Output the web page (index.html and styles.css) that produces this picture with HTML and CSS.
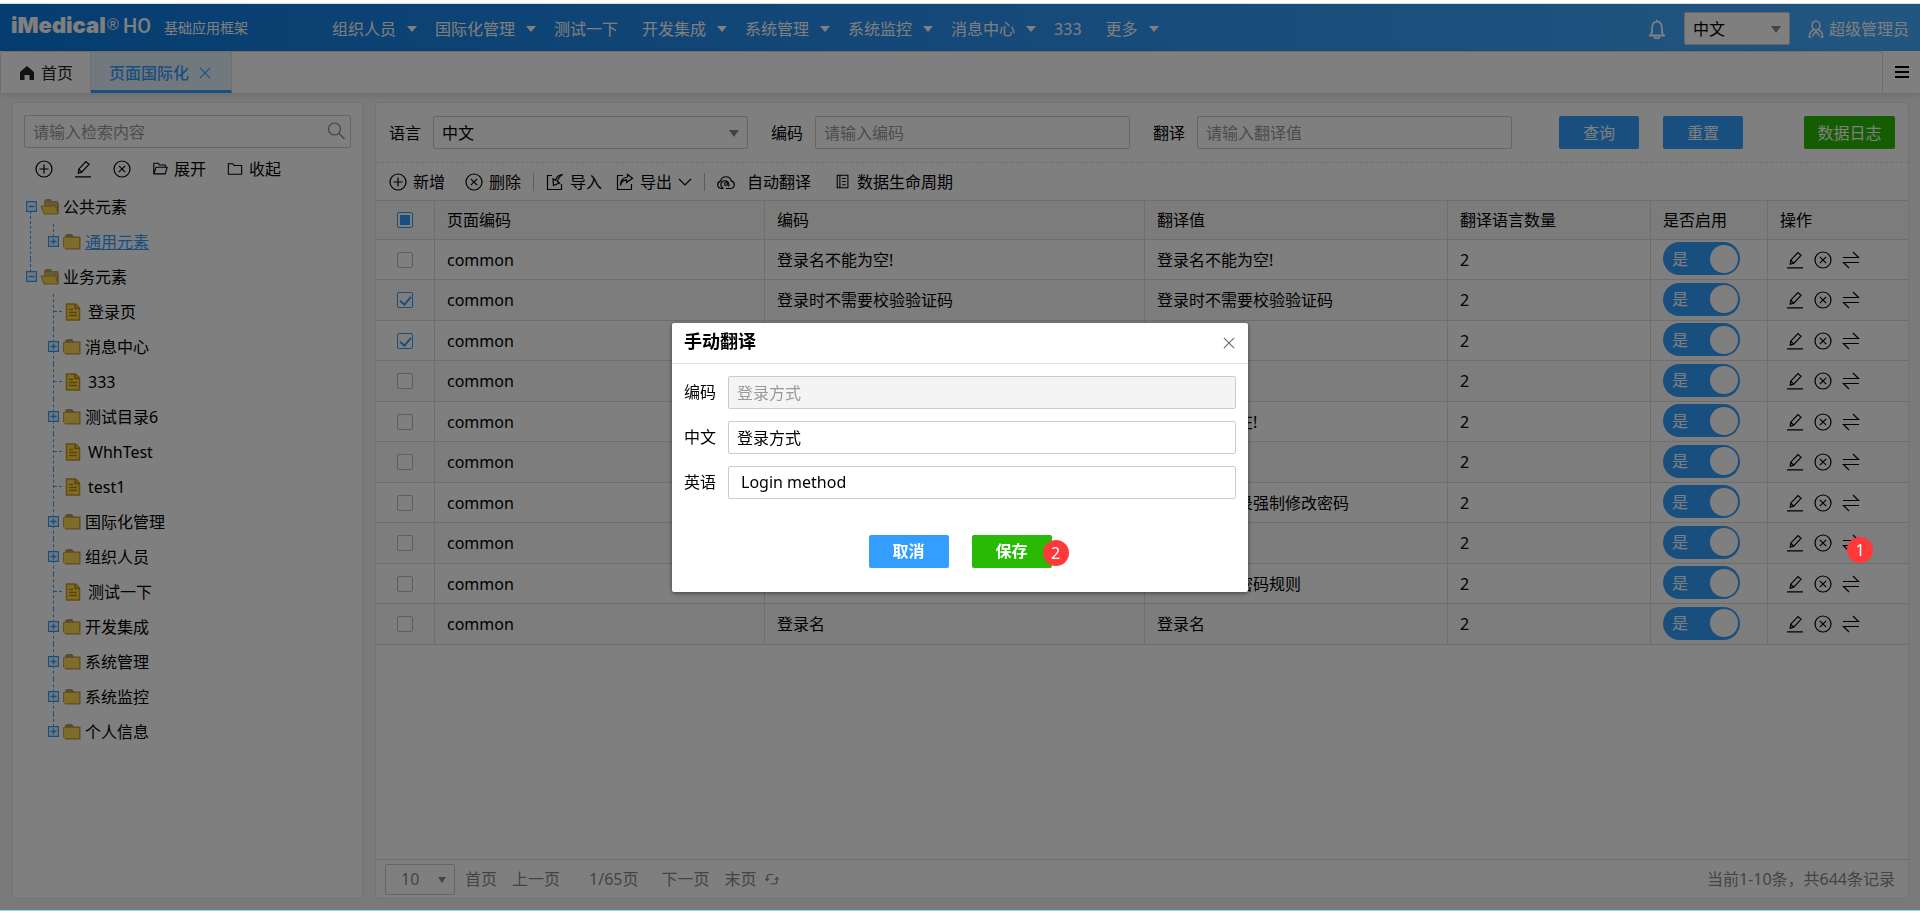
FILE: index.html
```html
<!DOCTYPE html>
<html lang="zh-CN">
<head>
<meta charset="utf-8">
<title>页面国际化</title>
<link rel="stylesheet" href="styles.css">
</head>
<body>
<svg class="sprite" aria-hidden="true">
  <symbol id="i-plus" viewBox="0 0 18 18"><circle cx="9" cy="9" r="8"/><path d="M9 4.5v9M4.5 9h9"/></symbol>
  <symbol id="i-del" viewBox="0 0 18 18"><circle cx="9" cy="9" r="8"/><path d="M5.8 5.8l6.4 6.4M12.2 5.8l-6.4 6.4"/></symbol>
  <symbol id="i-edit" viewBox="0 0 18 18"><path d="M1 16.8h16M4.2 13.2l.5-4L12 1.6l3 2.7-7.3 7.9zM4.7 9.2l3 3M4.2 13.2l1.2-1.3"/></symbol>
  <symbol id="i-swap" viewBox="0 0 18 18"><path d="M1 6.5h15.5L11 1M17 11.5H1.500L7 17"/></symbol>
  <symbol id="i-fopen" viewBox="0 0 18 18"><path d="M2 14.500V2.500h5l1.500 2h6.500V7M2 14.500L4.500 7H17l-2 7.500z"/></symbol>
  <symbol id="i-fclosed" viewBox="0 0 18 18"><path d="M1.500 15V3h5L8 5h8.500v10z"/></symbol>
  <symbol id="i-in" viewBox="0 0 18 18"><path d="M6 2.500H1.500v14h14V11M16.500 1.500C12 2 10 4 9.800 7.500L7 5.800 7.500 12.500 13.500 10 11.500 8.600C12 5.500 13.500 3 16.500 1.500z"/></symbol>
  <symbol id="i-out" viewBox="0 0 18 18"><path d="M7 2.500H1.500v14h14V11M4.500 12.500C5 8.500 7 7 10.500 6.800V9.500L16.500 5.300 11.500 1.500V4C7.500 4.500 4.500 7 4.500 12.500z"/></symbol>
  <symbol id="i-cloud" viewBox="0 0 18 18"><path d="M6.500 15.500H4.500A3.700 3.700 0 0 1 3.600 8.200 5.500 5.500 0 0 1 14.400 8.200 3.700 3.700 0 0 1 13.500 15.500H9M6.500 15.500A4 4 0 1 1 11.500 13.500"/><circle cx="9" cy="11" r="1.500"/></symbol>
  <symbol id="i-book" viewBox="0 0 18 18"><path d="M2.500 1.500h12v14h-12zM5.500 1.500v14M8 5h4M8 8.500h4M8 12h4"/></symbol>
  <symbol id="i-chev" viewBox="0 0 14 14"><path d="M1 4l6 6 6-6"/></symbol>
  <symbol id="i-close" viewBox="0 0 14 14"><path d="M1 1l12 12M13 1L1 13"/></symbol>
  <symbol id="i-search" viewBox="0 0 18 18"><circle cx="7.500" cy="7" r="6"/><path d="M12 11.500l5.500 5.500"/></symbol>
  <symbol id="i-bell" viewBox="0 0 18 20"><path d="M1 16.500h16M3 16c1.200-2 1-4 1.200-8C4.500 4.500 6.500 2.600 9 2.600s4.500 1.900 4.800 5.400c.2 4 0 6 1.200 8M9 .8v2M6.500 17.500a2.500 2 0 0 0 5 0"/></symbol>
  <symbol id="i-user" viewBox="0 0 16 18"><path d="M8 1a4 4.500 0 0 1 4 4.500A4 4.500 0 0 1 8 10 4 4.500 0 0 1 4 5.500 4 4.500 0 0 1 8 1zM5.500 9.500C3 11 1.500 13 1.200 17h2.500M10.500 9.500c2.500 1.500 4 3.500 4.300 7.500h-2.500M4.500 16l3.500-5 3.500 5"/></symbol>
  <symbol id="i-home" viewBox="0 0 14 14"><path class="fill" d="M7 0l7 6v8H9.500V9h-5v5H0V6z"/></symbol>
  <symbol id="i-menu" viewBox="0 0 14 14"><path class="fill" d="M0 1h14v2H0zM0 6h14v2H0zM0 11h14v2H0z"/></symbol>
  <symbol id="i-refresh" viewBox="0 0 14 14"><path d="M2 8V5.500Q2 2.500 5 2.500h3.500M5.500 12H9q3 0 3-3V6M.5 6.500L2 8.500l2-2M10 7.500L12 5.500l1.500 2"/></symbol>
  <symbol id="t-open" viewBox="0 0 20 18"><path fill="#bda05a" d="M4 3l2-2h5l1 2h6v10H4z"/><path fill="#c8b478" d="M5 4h12v5H5z"/><path fill="#ffd54f" stroke="#c39a3a" d="M1 8h14.500l2.500 8H4z"/><path stroke="#c9a24a" fill="none" d="M18.500 5v10.500"/></symbol>
  <symbol id="t-folder" viewBox="0 0 20 18"><path fill="#b8955a" d="M3 2.500L5 1h5l2 2.500h6.500v13H3z"/><path fill="#fdd956" stroke="#cfa540" d="M1.500 4.500h15l1 1v10H3L1.500 14z"/></symbol>
  <symbol id="t-file" viewBox="0 0 16 18"><path fill="#ffd84f" stroke="#c8961e" stroke-width="1.500" d="M1.500 1h9l4 4v12h-13z"/><path stroke="#b8860b" stroke-width="1.500" fill="none" d="M10 1v4.500h4.500M4 6.500h4M4 9.500h8M4 12.500h8"/></symbol>
  <symbol id="t-minus" viewBox="0 0 11 11"><path d="M.5.5h10v10H.5zM2.500 5.500h6"/></symbol>
  <symbol id="t-plus" viewBox="0 0 11 11"><path d="M.5.5h10v10H.5zM2.500 5.500h6M5.500 2.500v6"/></symbol>
</svg>

<header class="header">
  <div class="brand"><span class="brand-name">iMedical</span><span class="brand-reg">®</span><span class="brand-ho">HO</span><span class="brand-sub">基础应用框架</span></div>
  <nav class="nav">
    <a href="#" class="has-menu">组织人员</a><a href="#" class="has-menu">国际化管理</a><a href="#">测试一下</a><a href="#" class="has-menu">开发集成</a><a href="#" class="has-menu">系统管理</a><a href="#" class="has-menu">系统监控</a><a href="#" class="has-menu">消息中心</a><a href="#">333</a><a href="#" class="has-menu">更多</a>
  </nav>
  <div class="tools">
    <button class="plain" aria-label="通知"><svg class="icon bell"><use href="#i-bell"/></svg></button>
    <span class="select lang"><select aria-label="界面语言"><option>中文</option></select></span>
    <a href="#" class="user"><svg class="icon person"><use href="#i-user"/></svg>超级管理员</a>
  </div>
</header>

<div class="tabs">
  <div class="tab-list">
    <a href="#" class="tab"><svg class="icon sm"><use href="#i-home"/></svg>首页</a>
    <a href="#" class="tab active">页面国际化<svg class="icon xs"><use href="#i-close"/></svg></a>
  </div>
  <button class="plain tab-menu" aria-label="菜单"><svg class="icon sm"><use href="#i-menu"/></svg></button>
</div>

<main class="main">
  <aside class="panel side">
    <div class="search"><input class="field" type="text" aria-label="检索" placeholder="请输入检索内容"><svg class="icon"><use href="#i-search"/></svg></div>
    <div class="side-tools">
      <button class="plain" aria-label="新增"><svg class="icon"><use href="#i-plus"/></svg></button>
      <button class="plain" aria-label="修改"><svg class="icon"><use href="#i-edit"/></svg></button>
      <button class="plain" aria-label="删除"><svg class="icon"><use href="#i-del"/></svg></button>
      <button class="plain"><svg class="icon mid"><use href="#i-fopen"/></svg>展开</button>
      <button class="plain"><svg class="icon mid"><use href="#i-fclosed"/></svg>收起</button>
    </div>
    <ul class="tree" id="tree"></ul>
  </aside>

  <section class="panel content">
    <form class="filters">
      <div class="group"><label for="f-lang">语言</label><span class="select"><select id="f-lang"><option>中文</option></select></span></div>
      <div class="group"><label for="f-code">编码</label><input class="field" id="f-code" type="text" placeholder="请输入编码"></div>
      <div class="group"><label for="f-text">翻译</label><input class="field" id="f-text" type="text" placeholder="请输入翻译值"></div>
      <div class="actions">
        <button type="button" class="btn">查询</button>
        <button type="button" class="btn">重置</button>
        <button type="button" class="btn green log">数据日志</button>
      </div>
    </form>
    <div class="toolbar">
      <button class="plain"><svg class="icon"><use href="#i-plus"/></svg>新增</button>
      <button class="plain"><svg class="icon"><use href="#i-del"/></svg>删除</button>
      <span class="sep"></span>
      <button class="plain"><svg class="icon"><use href="#i-in"/></svg>导入</button>
      <button class="plain export"><svg class="icon"><use href="#i-out"/></svg>导出<svg class="icon sm"><use href="#i-chev"/></svg></button>
      <span class="sep"></span>
      <button class="plain wide"><svg class="icon"><use href="#i-cloud"/></svg>自动翻译</button>
      <button class="plain"><svg class="icon mid"><use href="#i-book"/></svg>数据生命周期</button>
    </div>
    <table class="grid">
      <colgroup><col class="c-check"><col class="c-page"><col class="c-code"><col class="c-text"><col class="c-count"><col class="c-on"><col></colgroup>
      <thead><tr><th><input type="checkbox" class="check partial" aria-label="全选"></th><th>页面编码</th><th>编码</th><th>翻译值</th><th>翻译语言数量</th><th>是否启用</th><th>操作</th></tr></thead>
      <tbody id="rows"></tbody>
    </table>
    <footer class="pager">
      <span class="select size"><select aria-label="每页条数"><option>10</option></select></span>
      <a href="#">首页</a><a href="#">上一页</a><span class="pages">1/65页</span><a href="#">下一页</a><a href="#">末页</a>
      <button class="plain" aria-label="刷新"><svg class="icon sm"><use href="#i-refresh"/></svg></button>
      <span class="total">当前1-10条，共644条记录</span>
    </footer>
  </section>
</main>

<div class="overlay">
  <div class="dialog" role="dialog" aria-labelledby="dlg-title">
    <div class="dialog-head"><h2 id="dlg-title">手动翻译</h2><button class="plain" aria-label="关闭"><svg class="icon xs"><use href="#i-close"/></svg></button></div>
    <form class="dialog-body">
      <div class="group"><label for="d-code">编码</label><input class="field" id="d-code" type="text" value="登录方式" disabled></div>
      <div class="group"><label for="d-zh">中文</label><input class="field" id="d-zh" type="text" value="登录方式"></div>
      <div class="group"><label for="d-en">英语</label><input class="field en" id="d-en" type="text" value="Login method"></div>
      <div class="dialog-actions">
        <button type="button" class="btn strong">取消</button>
        <button type="button" class="btn green strong">保存<span class="badge on-btn">2</span></button>
      </div>
    </form>
  </div>
</div>
<script src="app.js"></script>
</body>
</html>
```

FILE: styles.css
```css
* { box-sizing: border-box; }
body { margin: 0; padding-top: 3px; min-height: 100vh; display: flex; flex-direction: column; background: #fff; border-bottom: 1px solid #a9d6d6; color: #000; font: 16px/24px "Noto Sans", "Noto Sans CJK SC", sans-serif; }
button, input, select { font: inherit; color: inherit; }
a { color: inherit; text-decoration: none; }
.sprite { position: absolute; width: 0; height: 0; }
.icon { width: 18px; height: 18px; flex: none; fill: none; stroke: currentColor; stroke-width: 1.2; }
.icon.mid { width: 16px; height: 16px; }
.icon.sm { width: 14px; height: 14px; }
.icon.xs { width: 12px; height: 12px; }
.fill { fill: currentColor; stroke: none; }
.plain { display: inline-flex; align-items: center; gap: 6px; padding: 0; border: 0; background: none; white-space: nowrap; }

.header { display: flex; align-items: center; height: 48px; padding: 2px 11px 0; border-top: 1px solid #d8dce0; color: #fff; background: linear-gradient(90deg, #0c7ae0, #2a92f2 50%, #46acff); }
.brand { display: flex; align-items: baseline; width: 321px; height: 32px; }
.brand-name { width: 96px; font: 900 22px/24px Inter, sans-serif; }
.brand-reg { width: 16px; font: 16px/24px "Liberation Sans", sans-serif; align-self: flex-start; }
.brand-ho { width: 41px; font: 500 20px/24px Roboto, sans-serif; }
.brand-sub { font-size: 14px; }
.nav { display: flex; gap: 18px; }
.nav a { display: flex; align-items: center; padding-right: 6px; white-space: nowrap; }
.nav .has-menu { gap: 11px; padding: 0; }
.nav .has-menu::after { content: ""; border: 5px solid transparent; border-top: 6px solid #fff; border-bottom: 0; }
.tools { display: flex; align-items: center; gap: 18px; margin-left: auto; }
.bell { height: 20px; stroke-width: 1.8; }
.person { width: 16px; stroke-width: 1.5; }
.user { display: flex; align-items: center; gap: 5px; }

.select { position: relative; display: flex; flex: 1; }
.select select { width: 100%; height: 33px; padding: 0 8px; appearance: none; border: 1px solid #ccc; border-radius: 2px; background: #fff; }
.select::after { content: ""; position: absolute; right: 9px; top: 14px; border: 5px solid transparent; border-top: 7px solid #888; border-bottom: 0; pointer-events: none; }
.lang { flex: none; width: 106px; color: #000; }

.tabs { display: flex; height: 42px; z-index: 1; background: #fff; box-shadow: 0 2px 6px rgba(0, 0, 0, .12); }
.tab-list { display: flex; flex: 1; border: 1px solid #ddd; border-bottom: 0; border-radius: 4px 4px 0 0; }
.tab { display: flex; align-items: center; gap: 7px; padding: 0 17px 0 19px; color: #222; border-right: 1px solid #ddd; }
.tab.active { gap: 10px; padding: 3px 20px 0 18px; color: #339eff; font-weight: 500; background: #e3f2fd; border-bottom: 3px solid #339eff; }
.tab-menu { width: 37px; padding-left: 12px; }

.main { flex: 1; display: grid; grid-template-columns: 351px minmax(0, 1fr); gap: 12px; padding: 9px 11px 11px 12px; background: #f5f5f5; }
.panel { border: 1px solid #e2e2e2; border-radius: 4px; background: #fff; }
.field { flex: 1; min-width: 0; height: 33px; padding: 0 8px; border: 1px solid #ccc; border-radius: 2px; background: #fff; }
.field::placeholder { color: #999; opacity: 1; }
.field:disabled { background: #f4f4f4; color: #999; }
.field.en { padding-left: 12px; }

.side { padding: 12px 11px; }
.search { position: relative; display: flex; }
.search .icon { position: absolute; right: 6px; top: 7px; color: #888; }
.side-tools { display: flex; align-items: center; gap: 21px; height: 41px; padding-left: 11px; }
.tree, .tree ul { margin: 0; padding: 0; list-style: none; }
.tree li { position: relative; }
.tree li::before { content: ""; position: absolute; left: 6px; top: 0; bottom: 0; border-left: 1px dashed #339eff; }
.tree > li:first-child::before { top: 12px; }
.tree li:last-child::before { bottom: auto; height: 18px; }
.tree ul { padding-left: 23px; }
.node { position: relative; display: flex; align-items: center; height: 35px; padding-left: 2px; gap: 3px; }
.tree ul .node { padding-left: 1px; }
.node .box { width: 11px; height: 11px; fill: #e3f2fd; stroke: #339eff; stroke-width: 1.3; }
.node .pic { width: 20px; height: 18px; }
.node .pic.file { width: 16px; margin-right: 4px; }
.node .dash { flex: none; width: 8px; margin-left: 6px; border-top: 1px dashed #339eff; }
.node.picked a { color: #339eff; text-decoration: underline; }

.content { display: flex; flex-direction: column; }
.filters { display: flex; gap: 23px; padding: 13px; border-bottom: 1px dashed #ddd; }
.group { display: flex; flex: 1; align-items: center; gap: 12px; }
.actions { display: flex; gap: 24px; padding-left: 24px; }
.btn { position: relative; width: 80px; height: 33px; padding: 0; border: 0; border-radius: 2px; background: #339eff; color: #fff; }
.btn.green { background: #28ba05; }
.btn.log { width: 91px; margin-left: 37px; }
.btn.strong { font-weight: 700; }
.toolbar { display: flex; align-items: center; height: 37px; padding-left: 13px; gap: 16px; }
.toolbar .plain + .plain { margin-left: 4px; }
.toolbar .plain.export { margin-left: -2px; }
.toolbar .wide { gap: 12px; margin-right: 4px; }
.toolbar .sep { width: 1px; height: 18px; margin: 0 -4px; background: #bbb; }

.grid { width: 100%; table-layout: fixed; border-spacing: 0; border-top: 1px solid #ddd; }
.c-check { width: 59px; }
.c-page { width: 330px; }
.c-code { width: 380px; }
.c-text { width: 303px; }
.c-count { width: 203px; }
.c-on { width: 117px; }
.grid th, .grid td { height: 40px; padding: 0 0 0 12px; border: 0 solid #ddd; border-width: 0 1px 1px 0; text-align: left; font-weight: 400; white-space: nowrap; }
.grid th { height: 39px; background: #f8f8f8; }
.grid tr:nth-child(even) td { height: 41px; background: #fbfbfb; }
.grid th:first-child, .grid td:first-child { padding: 0; text-align: center; }
.grid th:last-child, .grid td:last-child { border-right: 0; }
.check { position: relative; display: block; width: 16px; height: 16px; margin: 0 auto; appearance: none; border: 1px solid #bbb; border-radius: 2px; background: #fff; }
.check:checked, .check.partial { border-color: #339eff; }
.check.partial::after { content: ""; position: absolute; inset: 2px; background: #339eff; }
.check:checked::after { content: ""; position: absolute; left: 4px; top: 1px; width: 5px; height: 9px; border: solid #339eff; border-width: 0 2px 2px 0; transform: rotate(40deg); }
.switch { display: flex; align-items: center; justify-content: space-between; width: 77px; height: 33px; margin-bottom: 2px; padding: 0 2px 0 9px; border-radius: 17px; background: #339eff; color: #fff; }
.switch input { width: 28px; height: 28px; margin: 0; appearance: none; border-radius: 50%; background: #fff; }
.ops { display: flex; gap: 10px; padding-left: 6px; }
.ops .plain { position: relative; }

.pager { display: flex; align-items: center; gap: 15px; height: 39px; margin-top: auto; padding: 0 13px 0 9px; border-top: 1px solid #ddd; color: #888; }
.size { flex: none; width: 70px; margin-right: -5px; }
.size select { height: 31px; padding-left: 15px; }
.size::after { top: 13px; border-width: 6px 4px 0; }
.pages { margin: 0 8px 0 14px; }
.pager .plain { margin-left: -6px; }
.total { margin-left: auto; }

.overlay { position: fixed; inset: 4px 0 1px; z-index: 5; display: flex; align-items: center; justify-content: center; background: rgba(0, 0, 0, .5); }
.dialog { width: 576px; border-radius: 2px; background: #fff; box-shadow: 0 1px 4px rgba(0, 0, 0, .5); }
.dialog-head { display: flex; align-items: center; justify-content: space-between; height: 41px; padding: 0 13px 0 12px; border-bottom: 1px solid #e5e5e5; color: #666; }
.dialog-head h2 { margin: 0 0 4px; font-size: 18px; color: #000; }
.dialog-body { display: flex; flex-direction: column; gap: 12px; padding: 12px 12px 24px; }
.dialog-actions { display: flex; justify-content: center; gap: 23px; padding-top: 24px; }
.badge { position: absolute; z-index: 20; width: 26px; height: 26px; border-radius: 50%; background: #ff3939; color: #fff; font-size: 16px; font-weight: 400; line-height: 26px; text-align: center; }
.badge.on-btn { left: 71px; top: 5px; }
.badge.on-row { left: 5px; top: 3px; }
```

FILE: app.js
```js
const icon = (id, cls = "icon") => `<svg class="${cls}"><use href="#${id}"/></svg>`;

const tree = [
  { name: "公共元素", children: ["+通用元素"] },
  { name: "业务元素", children: ["登录页", "+消息中心", "333", "+测试目录6", "WhhTest", "test1", "+国际化管理", "+组织人员", "测试一下", "+开发集成", "+系统管理", "+系统监控", "+个人信息"] }
];

const leaf = (text) => {
  const folder = text.startsWith("+");
  const name = text.replace("+", "");
  const art = folder
    ? icon("t-plus", "box") + icon("t-folder", "pic")
    : '<span class="dash"></span>' + icon("t-file", "pic file");
  return `<li><div class="node${name === "通用元素" ? " picked" : ""}">${art}<a href="#">${name}</a></div></li>`;
};

document.getElementById("tree").innerHTML = tree.map((n) =>
  `<li><div class="node">${icon("t-minus", "box")}${icon("t-open", "pic")}<a href="#">${n.name}</a></div><ul>${n.children.map(leaf).join("")}</ul></li>`
).join("");

const rows = ["登录名不能为空!", "登录时不需要校验验证码", "登录密码", "登录验证", "登录名不存在!", "登录科室", "是否首次登录强制修改密码", "登录方式", "不符合系统密码规则", "登录名"];
const checked = [1, 2];
const marked = 7;

document.getElementById("rows").innerHTML = rows.map((text, i) => `<tr>
  <td><input type="checkbox" class="check" aria-label="选择第${i + 1}行"${checked.includes(i) ? " checked" : ""}></td>
  <td>common</td><td>${text}</td><td>${text}</td><td>2</td>
  <td><label class="switch">是<input type="checkbox" role="switch" checked></label></td>
  <td><div class="ops">
    <button class="plain" aria-label="修改">${icon("i-edit")}</button>
    <button class="plain" aria-label="删除">${icon("i-del")}</button>
    <button class="plain" aria-label="翻译">${icon("i-swap")}${i === marked ? '<span class="badge on-row">1</span>' : ""}</button>
  </div></td></tr>`).join("");
```
